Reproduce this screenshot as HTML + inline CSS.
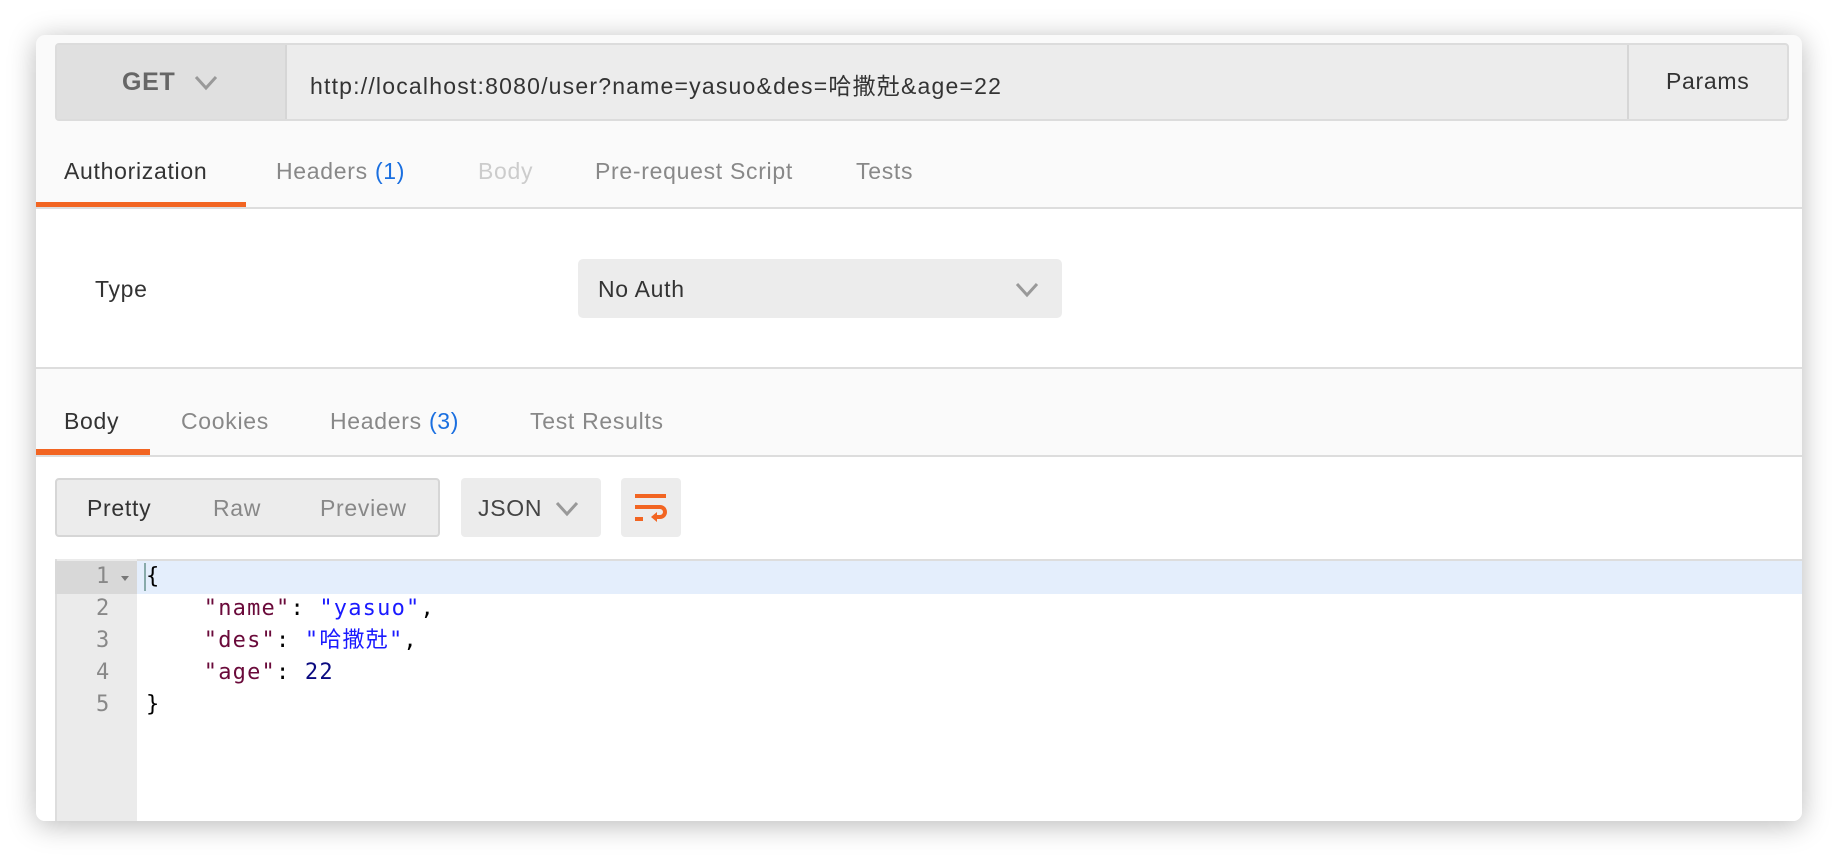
<!DOCTYPE html>
<html><head><meta charset="utf-8"><style>
*{margin:0;padding:0;box-sizing:border-box}
body{width:1838px;height:858px;background:#fff;position:relative;overflow:hidden;font-family:"Liberation Sans","Noto Sans CJK SC",sans-serif}
.win{position:absolute;left:36px;top:35px;width:1766px;height:786px;background:#fafafa;border-radius:9px;box-shadow:0 4px 28px rgba(0,0,0,.28);overflow:hidden}
.a{position:absolute}
.t{position:absolute;font-size:23px;letter-spacing:0.7px;color:#888;white-space:nowrap}
.code{font-family:"DejaVu Sans Mono","Noto Sans CJK SC",monospace;font-size:22px;letter-spacing:1.2px;position:absolute;white-space:pre;line-height:32px}
</style></head><body>
<div class="win">
 <div class="a" style="left:19px;top:8px;width:1734px;height:78px;background:#ececec;border:2px solid #dcdcdc;border-radius:4px"></div>
 <div class="a" style="left:21px;top:10px;width:230px;height:74px;background:#e0e0e0;border-right:2px solid #d6d6d6"></div>
 <div class="t" style="left:86px;top:33px;font-size:25px;color:#666;font-weight:bold">GET</div>
 <svg class="a" style="left:158px;top:40px" width="24" height="16"><path d="M2 2 L12 13 L22 2" stroke="#999" stroke-width="3" fill="none"/></svg>
 <div class="t" style="left:274px;top:32px;font-size:23px;letter-spacing:1.2px;color:#333">http://localhost:8080/user?name=yasuo&amp;des=哈撒兙&amp;age=22</div>
 <div class="a" style="left:1591px;top:10px;width:2px;height:74px;background:#d6d6d6"></div>
 <div class="t" style="left:1630px;top:33px;color:#333">Params</div>

 <div class="t" style="left:28px;top:123px;color:#333">Authorization</div>
 <div class="t" style="left:240px;top:123px">Headers <span style="color:#1a6fe0">(1)</span></div>
 <div class="t" style="left:442px;top:123px;color:#ccc">Body</div>
 <div class="t" style="left:559px;top:123px">Pre-request Script</div>
 <div class="t" style="left:820px;top:123px">Tests</div>
 <div class="a" style="left:0;top:167px;width:210px;height:5px;background:#f26522"></div>
 <div class="a" style="left:0;top:172px;width:1766px;height:162px;background:#fff;border-top:2px solid #ddd;border-bottom:2px solid #ddd"></div>
 <div class="t" style="left:59px;top:241px;color:#333">Type</div>
 <div class="a" style="left:542px;top:224px;width:484px;height:59px;background:#ececec;border-radius:5px"></div>
 <div class="t" style="left:562px;top:241px;color:#333">No Auth</div>
 <svg class="a" style="left:979px;top:247px" width="24" height="16"><path d="M2 2 L12 13 L22 2" stroke="#999" stroke-width="3" fill="none"/></svg>

 <div class="t" style="left:28px;top:373px;color:#333">Body</div>
 <div class="t" style="left:145px;top:373px">Cookies</div>
 <div class="t" style="left:294px;top:373px">Headers <span style="color:#1a6fe0">(3)</span></div>
 <div class="t" style="left:494px;top:373px">Test Results</div>
 <div class="a" style="left:0;top:414px;width:114px;height:6px;background:#f26522"></div>
 <div class="a" style="left:0;top:420px;width:1766px;height:366px;background:#fff;border-top:2px solid #ddd"></div>
 <div class="a" style="left:19px;top:443px;width:385px;height:59px;background:#ececec;border:2px solid #d6d6d6;border-radius:4px"></div>
 <div class="t" style="left:51px;top:460px;color:#333">Pretty</div>
 <div class="t" style="left:177px;top:460px">Raw</div>
 <div class="t" style="left:284px;top:460px">Preview</div>
 <div class="a" style="left:425px;top:443px;width:140px;height:59px;background:#ececec;border-radius:4px"></div>
 <div class="t" style="left:442px;top:460px;color:#444">JSON</div>
 <svg class="a" style="left:519px;top:466px" width="24" height="16"><path d="M2 2 L12 13 L22 2" stroke="#999" stroke-width="3" fill="none"/></svg>
 <div class="a" style="left:585px;top:443px;width:60px;height:59px;background:#ececec;border-radius:4px"></div>
 <svg class="a" style="left:598px;top:458px" width="36" height="32"><path d="M1 3 H32 M1 14 H26 a5 5 0 0 1 0 10 H20 M1 26 H9" stroke="#f26522" stroke-width="4" fill="none"/><path d="M17 24 L23 19 L23 29 Z" fill="#f26522"/></svg>

 <div class="a" style="left:19px;top:524px;width:1747px;height:262px;background:#fff;border-top:2px solid #ddd"></div>
 <div class="a" style="left:19px;top:524px;width:82px;height:262px;background:#ebebeb;border-left:2px solid #ddd"></div>
 <div class="a" style="left:19px;top:526px;width:82px;height:33px;background:#d8d8d8"></div>
 <div class="a" style="left:101px;top:526px;width:1665px;height:33px;background:#e4eefc"></div>
 <div class="code" style="left:60px;top:526px;color:#888;text-align:right">1
2
3
4
5</div>
 <div class="a" style="left:85px;top:541px;width:0;height:0;border-left:4px solid transparent;border-right:4px solid transparent;border-top:5px solid #777"></div>
 <div class="a" style="left:108px;top:528px;width:2px;height:28px;background:#8aa"></div>
 <div class="code" style="left:110px;top:526px;color:#000">{
    <span style="color:#6a0a3a">"name"</span>: <span style="color:#1a1aff">"yasuo"</span>,
    <span style="color:#6a0a3a">"des"</span>: <span style="color:#1a1aff">"哈撒兙"</span>,
    <span style="color:#6a0a3a">"age"</span>: <span style="color:#0a0a80">22</span>
}</div>
</div>
</body></html>
